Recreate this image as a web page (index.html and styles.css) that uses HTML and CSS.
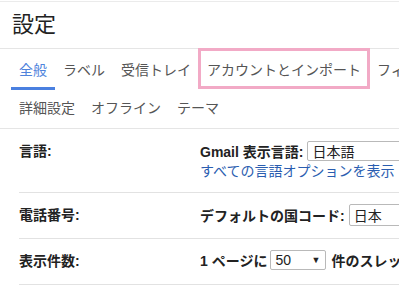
FILE: index.html
```html
<!DOCTYPE html>
<html lang="ja">
<head>
    <meta charset="UTF-8">
    <meta name="viewport" content="width=device-width, initial-scale=1.0">
    <title>設定</title>
    <link rel="stylesheet" href="styles.css">
</head>
<body>
    <div class="settings-header">
        <h1>設定</h1>
    </div>

    <div class="tabs">
        <div class="tab-row">
            <a class="tab active">全般</a>
            <a class="tab">ラベル</a>
            <a class="tab">受信トレイ</a>
            <a class="tab highlighted">アカウントとインポート</a>
            <a class="tab">フィルタとブロック中のアドレス</a>
        </div>
        <div class="tab-row second">
            <a class="tab">詳細設定</a>
            <a class="tab">オフライン</a>
            <a class="tab">テーマ</a>
        </div>
    </div>

    <div class="settings">
        <div class="setting-row">
            <div class="setting-label">言語:</div>
            <div class="setting-value">
                <div class="value-line">
                    <span class="value-label">Gmail 表示言語:</span>
                    <span class="select select-lang">日本語</span>
                </div>
                <a class="value-link">すべての言語オプションを表示</a>
            </div>
        </div>

        <div class="setting-row">
            <div class="setting-label">電話番号:</div>
            <div class="setting-value">
                <div class="value-line">
                    <span class="value-label">デフォルトの国コード:</span>
                    <span class="select select-country">日本</span>
                </div>
            </div>
        </div>

        <div class="setting-row compact">
            <div class="setting-label">表示件数:</div>
            <div class="setting-value">
                <div class="value-line">
                    <span class="value-label">1 ページに</span>
                    <span class="select select-count">50<span class="arrow">▼</span></span>
                    <span class="value-label">件のスレッドを表示</span>
                </div>
            </div>
        </div>
    </div>
</body>
</html>
```

FILE: styles.css
```css
body {
    font-family: "Liberation Sans", "Noto Sans CJK JP", sans-serif;
    color: #222;
    background-color: #ffffff;
    margin: 0;
    overflow: hidden;
    white-space: nowrap;
}

a {
    text-decoration: none;
}

.settings-header {
    margin-top: 1px;
    border-top: 1px solid #ebebeb;
    border-bottom: 1px solid #e5e5e5;
}

.settings-header h1 {
    margin: 0;
    padding: 12px 12px;
    font-size: 22px;
    line-height: 22px;
    font-weight: normal;
    color: #222;
}

.tabs {
    border-bottom: 1px solid #e5e5e5;
}

.tab-row {
    display: flex;
    padding-left: 11px;
}

.tab {
    position: relative;
    flex-shrink: 0;
    padding: 13px 8px 9px;
    font-size: 14px;
    line-height: 16px;
    color: #555;
    border-bottom: 3px solid transparent;
}

.tab.active {
    color: #4f83dc;
    border-bottom-color: #4a80e0;
}

.tab.highlighted::after {
    content: "";
    position: absolute;
    top: -1px;
    left: -1px;
    right: -1px;
    bottom: -2px;
    border: 3px solid #f2aac6;
}

.tab-row.second .tab {
    padding: 10px 8px 12px;
    border-bottom: 0;
}

.settings {
    margin-left: 19px;
}

.setting-row {
    display: grid;
    grid-template-columns: 181px 1fr;
    padding: 11px 0 12px;
    border-bottom: 1px solid #e2e2e2;
}

.setting-label {
    font-size: 14px;
    line-height: 22px;
    font-weight: bold;
    color: #222;
}

.value-line {
    display: flex;
    align-items: center;
    height: 22px;
}

.setting-row.compact .value-line {
    height: 20px;
}

.value-label {
    font-size: 14px;
    font-weight: bold;
    color: #222;
}

.select {
    position: relative;
    display: inline-flex;
    align-items: center;
    box-sizing: border-box;
    height: 20px;
    margin: 0 5px 0 4px;
    padding-left: 4px;
    border: 1px solid #b9b9b9;
    border-radius: 2px;
    font-size: 14px;
    color: #222;
}

.select-lang {
    width: 130px;
}

.select-country {
    width: 80px;
    height: 22px;
}

.select-count {
    width: 56px;
    margin-left: 3px;
}

.arrow {
    position: absolute;
    right: 5px;
    top: 4px;
    font-size: 9px;
}

.value-link {
    display: block;
    font-size: 14px;
    line-height: 18px;
    color: #2a5db0;
}
```
